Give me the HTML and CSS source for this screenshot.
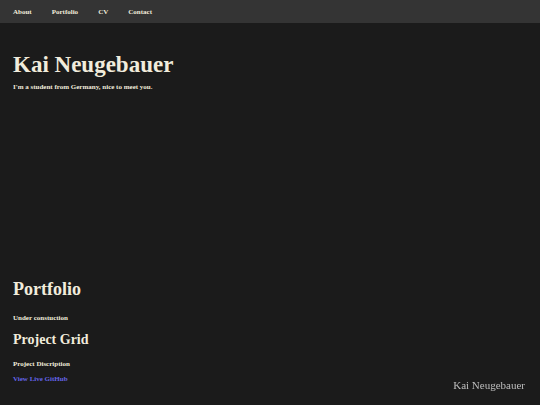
FILE: index.html
```html
<!DOCTYPE html>
<html lang="en">
<head>
  <meta charset="UTF-8">
  <meta name="viewport" content="width=device-width, initial-scale=1.0">
  <title>Kai Neugebauer</title>
  <link rel="stylesheet" href="styles.css">
</head>
<body>
  <nav class="nav">
    <a href="#about">About</a>
    <a href="#portfolio">Portfolio</a>
    <a href="#cv">CV</a>
    <a href="#contact">Contact</a>
  </nav>

  <header class="hero" id="about">
    <h1>Kai Neugebauer</h1>
    <p>I'm a student from Germany, nice to meet you.</p>
  </header>

  <section class="portfolio" id="portfolio">
    <h2>Portfolio</h2>
    <p>Under constuction</p>
    <div class="project">
      <h3>Project Grid</h3>
      <p>Project Discription</p>
      <a href="#">View Live GitHub</a>
    </div>
  </section>

  <footer class="footer">Kai Neugebauer</footer>
</body>
</html>
```

FILE: styles.css
```css
* {
  margin: 0; padding: 0; box-sizing: border-box;
}
body {
  background: #1b1b1b;
  color: #f1ecdc;
  font-family: "Liberation Serif", "DejaVu Serif", serif;
  font-weight: bold;
  min-height: 405px;
}
.nav {
  height: 23px;
  background: #343434;
  display: flex;
  align-items: center;
  gap: 20px;
  padding-left: 13px;
}
.nav a {
  color: #f1ecdc;
  text-decoration: none;
  font-size: 7px;
}
.hero {
  height: 254px;
  padding: 28px 13px 0;
}
.hero h1 {
  font-size: 23px;
  line-height: 28px;
}
.hero p {
  font-size: 7px;
  margin-top: 4px;
}
.portfolio {
  padding: 0 13px;
}
.portfolio h2 {
  font-size: 18px;
  line-height: 24px;
}
.portfolio p {
  font-size: 7px;
  margin-top: 13px;
}
.project h3 {
  font-size: 14px;
  line-height: 18px;
  margin-top: 9px;
}
.project p {
  margin-top: 11px;
}
.project a {
  display: block;
  color: #6464e8;
  text-decoration: none;
  font-size: 7px;
  margin-top: 7px;
}
.footer {
  position: fixed;
  right: 15px; bottom: 14px;
  color: #bdbdbd;
  font-weight: normal;
  font-size: 11px;
}
```
